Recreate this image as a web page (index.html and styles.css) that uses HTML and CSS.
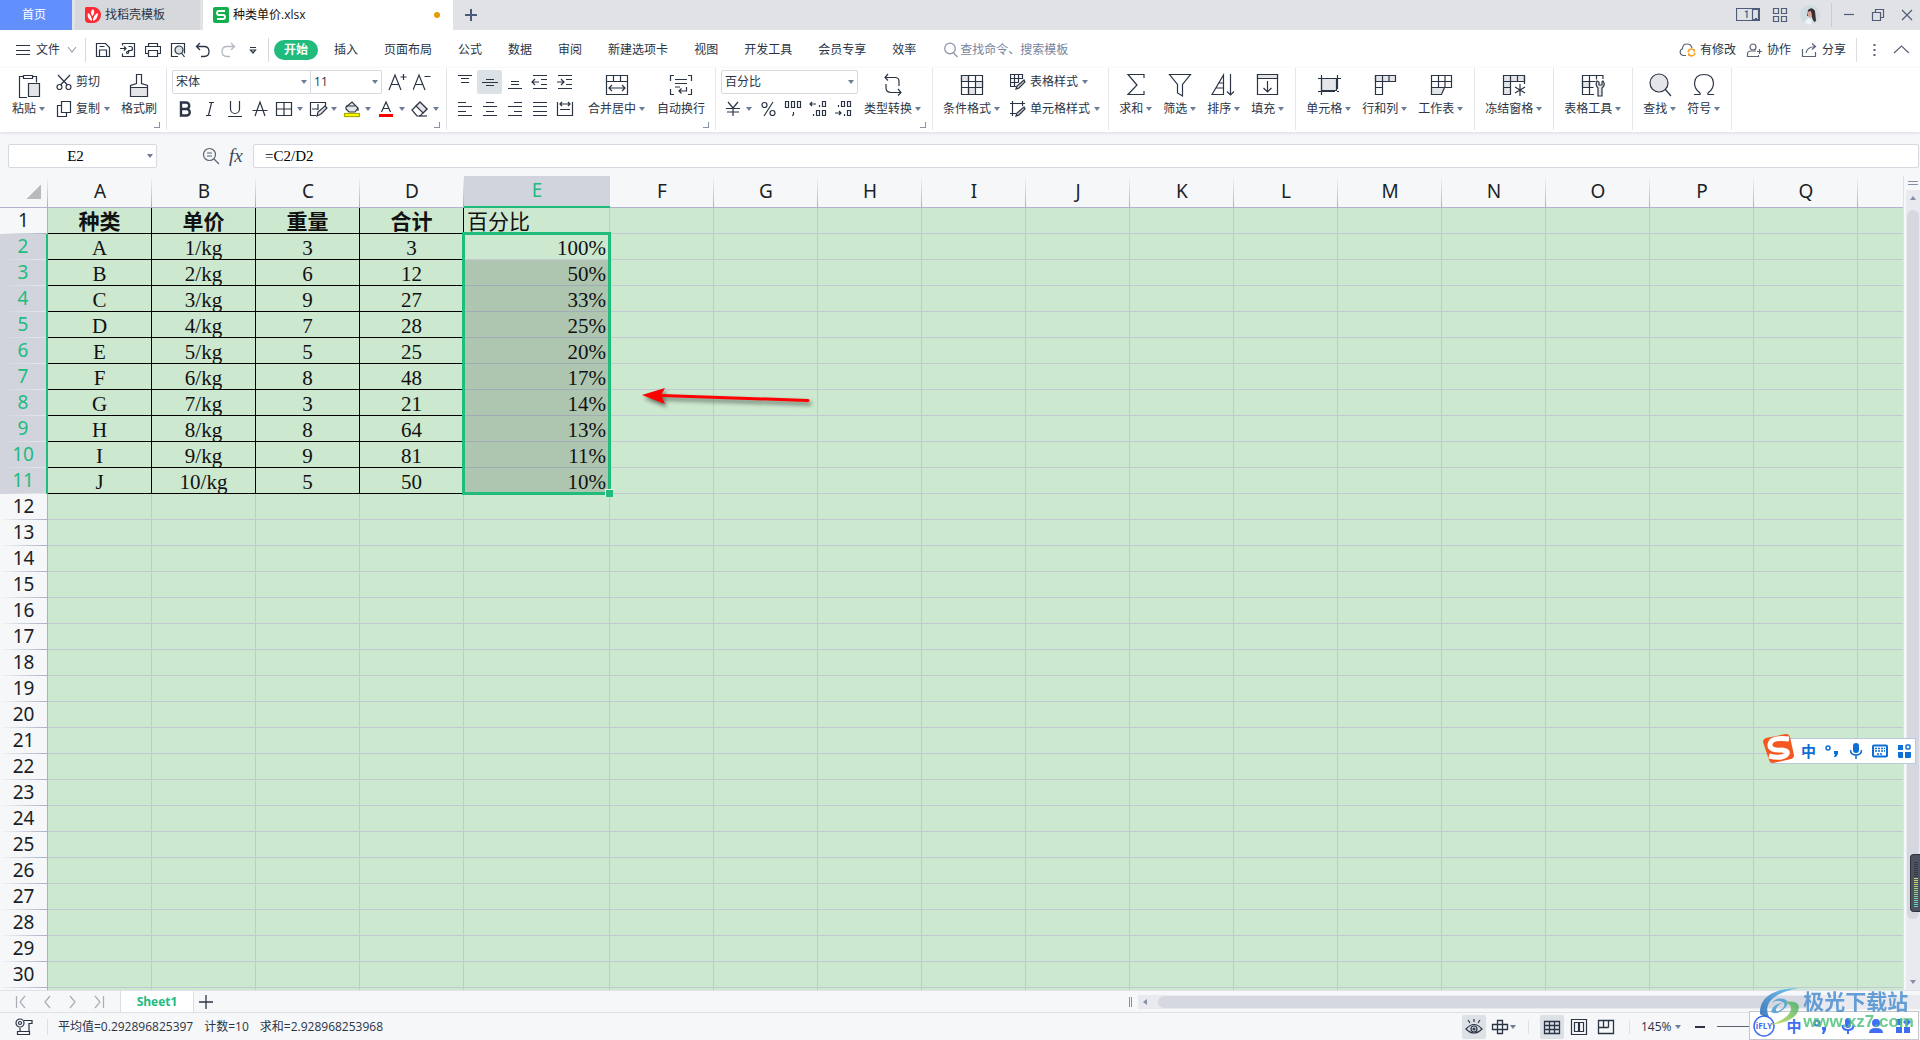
FILE: index.html
```html
<!DOCTYPE html>
<html lang="zh-CN">
<head>
<meta charset="utf-8">
<title>种类单价.xlsx</title>
<link rel="stylesheet" href="styles.css">
</head>
<body>
<header class="titlebar">
  <button class="tab tab-home">首页</button>
  <button class="tab tab-doc"><svg class="logo" viewBox="0 0 16 16"><path d="M1 0h7a8 8 0 0 1 0 16H4a4 4 0 0 1-4-4V1z" fill="#fb2c35"/><path d="M7 14C3 12 2 9 3 6c2 1 4 4 4 8zM7.500 9C5 6 6 4 8 2c2 2 1.500 5-.5 7zM8 14c0-4 2-7 5-8 0 4-2 7-5 8z" fill="#fff"/></svg>找稻壳模板</button>
  <button class="tab tab-active"><svg class="logo" viewBox="0 0 16 16"><rect width="16" height="16" rx="2" fill="#12b04c"/><path d="M12 4H6Q4 4 4 6t2 2h4q2 0 2 2t-2 2H4" fill="none" stroke="#fff" stroke-width="1.800"/></svg>种类单价.xlsx<span class="unsaved"></span></button>
  <button class="tab-add" aria-label="新建"><svg class="ic" viewBox="0 0 14 14"><path d="M7 1v12M1 7h12" stroke="#4b5a7a" stroke-width="2"/></svg></button>
  <div class="window-tools">
    <svg class="ic" width="24" height="16" viewBox="0 0 24 16"><path d="M.5 1.500h23v12H.5zM16.500 3.500v8M16.500 2.500h6v10h-6zM19 11.500h2"/><path d="M9 5l2-1v7"/></svg>
    <svg class="ic" width="16" height="16" viewBox="0 0 16 16"><path d="M1.500 1.500h5v5h-5zM9.500 1.500h5v5h-5zM1.500 9.500h5v5h-5zM9.500 9.500h5v5h-5z"/></svg>
    <svg width="20" height="20" viewBox="0 0 20 20"><circle cx="10" cy="10" r="10" fill="#cfdde3"/><path d="M8 5q4-4 7 1l1 10q-2 2-3-1l-2-5-4 1z" fill="#3a2b30"/><path d="M7 7l4-1 1 5-3 2z" fill="#d9a79c"/><path d="M4 18l4-5 3 1 1 6z" fill="#eef3f6"/></svg>
    <span class="bar"></span>
    <button aria-label="最小化"><svg class="ic" width="12" height="14" viewBox="0 0 12 14"><path d="M1 6.500h10"/></svg></button>
    <button aria-label="还原"><svg class="ic" width="14" height="14" viewBox="0 0 14 14"><path d="M1.500 4.500h8v8h-8zM4.500 4.500v-3h8v8h-3"/></svg></button>
    <button aria-label="关闭"><svg class="ic" width="12" height="14" viewBox="0 0 12 14"><path d="M1 2l10 10M11 2L1 12"/></svg></button>
  </div>
</header>

<nav class="menubar">
  <button class="file-menu"><svg class="ic" width="14" height="12" viewBox="0 0 14 12"><path d="M0 1.500h14M0 6.500h14M0 10.500h14"/></svg>文件<svg class="ic chev" width="10" height="8" viewBox="0 0 10 8"><path d="M1 1l4 5 4-5"/></svg></button>
  <span class="bar"></span>
  <div class="quick">
    <button aria-label="保存"><svg class="ic" viewBox="0 0 16 16"><path d="M1.500 1.500h9l4 4v9h-13zM4.500 14v-6h7v6M4.500 4.500h5"/></svg></button>
    <button aria-label="输出为PDF"><svg class="ic" viewBox="0 0 16 16"><path d="M2.500 3.500v-2h12v13h-12v-3M0 6.500h6M4 4.500l2 2-2 2M8.500 4.500h2a2 2 0 0 1 0 4h-2v2a1 1 0 1 1-1-1h2"/></svg></button>
    <button aria-label="打印"><svg class="ic" viewBox="0 0 16 16"><path d="M3.500 4.500v-3h9v3M3.500 11.500h-3v-7h15v7h-3M3.500 8.500h9v6h-9z"/></svg></button>
    <button aria-label="打印预览"><svg class="ic" viewBox="0 0 16 16"><path d="M8 14.500H1.500v-13h13v10"/><circle cx="9" cy="8" r="4" fill="#dcdfe4"/><path d="M11.500 11l3 4"/></svg></button>
    <button aria-label="撤销"><svg class="ic" viewBox="0 0 16 16"><path d="M5 1L1.500 4.500 5 8M2 4.500h7q5 0 5 5t-5 5H6" stroke-width="1.300"/></svg></button>
    <button aria-label="恢复"><svg class="ic pale" viewBox="0 0 16 16"><path d="M11 1l3.500 3.500L11 8M14 4.500H7q-5 0-5 5t5 5h3" stroke-width="1.300"/></svg></button>
    <button aria-label="自定义"><svg class="ic" viewBox="0 0 16 16"><path d="M5 5.500h6M5.500 8l2.500 3 2.500-3z"/></svg></button>
  </div>
  <span class="bar"></span>
  <div class="menus">
    <button class="on">开始</button><button>插入</button><button>页面布局</button><button>公式</button><button>数据</button><button>审阅</button><button>新建选项卡</button><button>视图</button><button>开发工具</button><button>会员专享</button><button>效率</button>
  </div>
  <label class="search"><svg class="ic" width="14" height="16" viewBox="0 0 14 16"><circle cx="6" cy="6.500" r="5.300"/><path d="M9.500 11l4 4"/></svg><input type="text" placeholder="查找命令、搜索模板" aria-label="查找命令"></label>
  <div class="share">
    <button><svg class="ic" viewBox="0 0 17 16"><path d="M7 13.500H4.500a3.500 3.500 0 0 1-1-6.800Q3.500 2 8 2q4 0 5 4"/><path d="M9 10a3.300 3.300 0 0 1 6-1.500V7M16 11a3.300 3.300 0 0 1-6 1.500V14" stroke="#f5a11c" stroke-width="1.600"/></svg>有修改</button>
    <button><svg class="ic" viewBox="0 0 17 16"><circle cx="7" cy="5" r="3"/><path d="M10 9H5q-3.500 0-3.500 3v2.500h11V13M11 9.500h5M13.500 7v5"/></svg>协作</button>
    <button><svg class="ic" viewBox="0 0 17 16"><path d="M1.500 7v7.500h13V10M5 11q1-6 9-6.500M11 1.500l3.500 3-3.500 3"/></svg>分享</button>
    <span class="bar"></span>
    <button aria-label="更多"><svg class="ic" viewBox="0 0 17 16"><path d="M8.500 2v2M8.500 7v2M8.500 12v2" stroke-width="2"/></svg></button>
    <button aria-label="折叠"><svg class="ic" viewBox="0 0 17 16"><path d="M1 11l7.500-7 7.500 7"/></svg></button>
  </div>
</nav>

<section class="ribbon">
  <div class="group g-clip launch">
    <button class="big"><svg class="ic" viewBox="0 0 28 28"><path d="M12 26.500H4.500v-21h4M18 5.500h3.500v6"/><path d="M8.500 4.500h9v3h-9z"/><path d="M13.500 12.500h11v13h-11z" fill="#e4e5e8"/></svg><span>粘贴<i class="caret"></i></span></button>
    <div class="rows">
      <button class="small"><svg class="ic" viewBox="0 0 16 16"><path d="M2 1l9.500 10M14 1L4.500 11"/><circle cx="3.500" cy="13" r="2.500"/><circle cx="12.500" cy="13" r="2.500"/></svg>剪切</button>
      <button class="small"><svg class="ic" viewBox="0 0 16 16"><path d="M5.500.5h9v11h-9zM5.500 4.500h-4v11h9v-4"/></svg>复制<i class="caret"></i></button>
    </div>
    <button class="big"><svg class="ic" viewBox="0 0 28 28"><path d="M5.500 16.500h17v9h-17z" fill="#e4e5e8"/><path d="M5.500 16.500v-2l6-2v-9h5v9l6 2v2"/></svg><span>格式刷</span></button>
  </div>

  <div class="group g-font launch">
    <div class="rows">
      <div class="row">
        <select class="sel sel-font" aria-label="字体"><option>宋体</option></select><select class="sel sel-size" aria-label="字号"><option>11</option></select>
        <button class="cell" aria-label="增大字号"><svg class="ic" viewBox="0 0 20 20"><path d="M1 18L7 3l6 15M3 12.500h8M15.500 2v6M12.500 5h6"/></svg></button>
        <button class="cell" aria-label="减小字号"><svg class="ic" viewBox="0 0 20 20"><path d="M0 18L6 3l6 15M2 12.500h8M11.500 4.500h6"/></svg></button>
      </div>
      <div class="row">
        <button class="cell" aria-label="加粗"><svg class="ic" viewBox="0 0 20 20"><path d="M6 3.500h5a3 3 0 0 1 0 6.500H6zM6 10h5.500a3 3 0 0 1 0 6.500H6z" stroke-width="2.400"/></svg></button>
        <button class="cell" aria-label="倾斜"><svg class="ic" viewBox="0 0 20 20"><path d="M9 3.500h5M6 16.500h5M11.500 4L8.500 16"/></svg></button>
        <button class="cell" aria-label="下划线"><svg class="ic" viewBox="0 0 20 20"><path d="M5.500 2v8a4.500 4.500 0 0 0 9 0V2M3 17.500h14"/></svg></button>
        <button class="cell" aria-label="删除线"><svg class="ic" viewBox="0 0 20 20"><path d="M5 17l5-14 5 14M2.500 11.500h15"/></svg></button>
        <button class="drop" aria-label="边框"><svg class="ic" viewBox="0 0 20 20"><path d="M2.500 3.500h15v13h-15zM10 3.500v13M2.500 10h15"/></svg><i class="caret"></i></button>
        <button class="drop" aria-label="绘图边框"><svg class="ic" viewBox="0 0 20 20"><path d="M17.500 7V3.500h-15v13H8M4 10h6M10 5v6" /><path d="M9 17l1-4 7-6 2 2-6 6z" fill="#e4e5e8"/></svg><i class="caret"></i></button>
        <button class="drop" aria-label="填充颜色"><svg class="ic" viewBox="0 0 20 20"><path d="M4 10V8l6-5 6 6-3 4H7z" fill="#e4e5e8"/><path d="M4 7h9M16 9v3"/><rect x="2.500" y="14.500" width="15" height="3" fill="#ff0" stroke="#a9a900"/></svg><i class="caret"></i></button>
        <button class="drop" aria-label="字体颜色"><svg class="ic" viewBox="0 0 20 20"><path d="M5.500 13L10 3l4.500 10M7 9.500h6"/><path d="M3 16.500h14" stroke="red" stroke-width="3"/></svg><i class="caret"></i></button>
        <button class="drop" aria-label="清除"><svg class="ic" viewBox="0 0 20 20"><path d="M2 11l8-8 7 7-7 7H7z"/><path d="M6 7l4-4 7 7-4 4z" fill="#e4e5e8"/><path d="M9 17h8"/></svg><i class="caret"></i></button>
      </div>
    </div>
  </div>

  <div class="group g-align launch">
    <div class="rows">
      <div class="row">
        <button class="cell" aria-label="顶端对齐"><svg class="ic" viewBox="0 0 20 20"><path d="M3 3.500h14M6 6.500h8M6 10.500h8"/></svg></button>
        <button class="cell on" aria-label="垂直居中"><svg class="ic" viewBox="0 0 20 20"><path d="M6 7.500h8M2 10.500h16M6 13.500h8"/></svg></button>
        <button class="cell" aria-label="底端对齐"><svg class="ic" viewBox="0 0 20 20"><path d="M6 9.500h8M6 12.500h8M3 16.500h14"/></svg></button>
        <button class="cell" aria-label="减少缩进"><svg class="ic" viewBox="0 0 20 20"><path d="M3 3.500h14M11 7.500h6M11 12.500h6M3 16.500h14M2 10h7M5 7l-3 3 3 3"/></svg></button>
        <button class="cell" aria-label="增加缩进"><svg class="ic" viewBox="0 0 20 20"><path d="M3 3.500h14M11 7.500h6M11 12.500h6M3 16.500h14M2 10h7M6 7l3 3-3 3"/></svg></button>
      </div>
      <div class="row">
        <button class="cell" aria-label="左对齐"><svg class="ic" viewBox="0 0 20 20"><path d="M3 3.500h8M3 7.500h14M3 12.500h8M3 16.500h14"/></svg></button>
        <button class="cell" aria-label="水平居中"><svg class="ic" viewBox="0 0 20 20"><path d="M6 3.500h8M3 7.500h14M6 12.500h8M3 16.500h14"/></svg></button>
        <button class="cell" aria-label="右对齐"><svg class="ic" viewBox="0 0 20 20"><path d="M9 3.500h8M3 7.500h14M9 12.500h8M3 16.500h14"/></svg></button>
        <button class="cell" aria-label="两端对齐"><svg class="ic" viewBox="0 0 20 20"><path d="M3 3.500h14M3 7.500h14M3 12.500h14M3 16.500h14"/></svg></button>
        <button class="cell" aria-label="分散对齐"><svg class="ic" viewBox="0 0 20 20"><path d="M2.500 3v14M17.500 3v14M5 10.500h10M3 16.500h14M5 5h10M7 3L5 5l2 2M13 3l2 2-2 2"/></svg></button>
      </div>
    </div>
    <button class="big"><svg class="ic" viewBox="0 0 28 28"><path d="M3.500 4.500h21v19h-21zM3.500 10.500h21M10.500 5v5M17.500 5v5M6 17h16M9 14l-3 3 3 3M19 14l3 3-3 3"/></svg><span>合并居中<i class="caret"></i></span></button>
    <button class="big"><svg class="ic" viewBox="0 0 28 28"><path d="M7 4.500H3.500V10M21 4.500h3.500V10M7 23.500H3.500V18M21 23.500h3.500V18M8 8.500h12M8 12.500h12M8 16h5M19.500 16v4H12M14.500 17.500L12 20l2.500 2.500"/></svg><span>自动换行</span></button>
  </div>

  <div class="group g-num launch">
    <div class="rows">
      <select class="sel sel-num" aria-label="数字格式"><option>百分比</option></select>
      <div class="row">
        <button class="drop" aria-label="货币"><svg class="ic" viewBox="0 0 20 20"><path d="M5 3l5 6 5-6M10 9v8M3 9.500h14M4 13h12" /></svg><i class="caret"></i></button>
        <button class="cell" aria-label="百分比样式"><svg class="ic" viewBox="0 0 20 20"><circle cx="6.500" cy="6" r="2.500"/><circle cx="14.500" cy="14" r="2.500"/><path d="M15 3L6 17"/></svg></button>
        <button class="cell" aria-label="千位分隔"><svg class="ic" viewBox="0 0 20 20"><path d="M2.500 2.500h3v6h-3zM8.500 2.500h3v6h-3zM14.500 2.500h3v6h-3zM10.500 13v2l-1 2"/></svg></button>
        <button class="cell" aria-label="增加小数"><svg class="ic" viewBox="0 0 20 20"><path d="M14.500 2.500h3v5h-3zM11.500 6v2M2 5h6M4 3L2 5l2 2M8.500 11.500h3v5h-3zM14.500 11.500h3v5h-3zM5.500 15v2"/></svg></button>
        <button class="cell" aria-label="减少小数"><svg class="ic" viewBox="0 0 20 20"><path d="M8.500 2.500h3v5h-3zM14.500 2.500h3v5h-3zM5.500 6v2M2 14h6M6 12l2 2-2 2M14.500 11.500h3v5h-3zM11.500 15v2"/></svg></button>
      </div>
    </div>
    <button class="big"><svg class="ic" viewBox="0 0 28 28"><path d="M9 3L6 6.500l3 3M6 6.500h10q4 0 4 4V15M19 18l3 3.500-3 3M22 21.500H12q-5 0-5-5V13"/></svg><span>类型转换<i class="caret"></i></span></button>
  </div>

  <div class="group g-style">
    <button class="big"><svg class="ic" viewBox="0 0 28 28"><path d="M3.500 4.500h21v19h-21z"/><path d="M3.500 4.500h7v6h-7zM17.500 10.500h7v6h-7zM10.500 16.500h7v7h-7z" fill="#e4e5e8"/><path d="M3.500 10.500h21M3.500 16.500h21M10.500 4.500v19M17.500 4.500v6"/></svg><span>条件格式<i class="caret"></i></span></button>
    <div class="rows">
      <button class="small"><svg class="ic" viewBox="0 0 16 16"><path d="M12.500 5V.5H.5v12h6M.5 4.500h12M.5 8.500h8M4.500.5v12M8.500.5v8"/><path d="M6 15l1-3 7-6 1 2-6 6z" fill="#c9ccd2"/></svg>表格样式<i class="caret"></i></button>
      <button class="small"><svg class="ic" viewBox="0 0 16 16"><path d="M0 2.500h15M2.500 0v15M12.500 0v5M0 12.500h6"/><path d="M6 15l1-3 7-6 1 2-6 6z" fill="#c9ccd2"/></svg>单元格样式<i class="caret"></i></button>
    </div>
  </div>

  <div class="group g-plain">
    <button class="big"><svg class="ic" viewBox="0 0 28 28"><path d="M22 7V3.500H6L15 14 6 23.500h16V20"/></svg><span>求和<i class="caret"></i></span></button>
    <button class="big"><svg class="ic" viewBox="0 0 28 28"><path d="M3.500 3.500h21l-8 10V25l-5-3v-8.500z"/></svg><span>筛选<i class="caret"></i></span></button>
    <button class="big"><svg class="ic" viewBox="0 0 28 28"><path d="M2 23.500L13.500 4v19.500zM6 17h7M9 12h4M20.500 3v21M17 20.500l3.500 3.500 3.500-3.500"/></svg><span>排序<i class="caret"></i></span></button>
    <button class="big"><svg class="ic" viewBox="0 0 28 28"><path d="M3.500 3.500h20v20h-20z"/><path d="M3.500 3.500h20v4h-20z" fill="#e4e5e8"/><path d="M13.500 10v11M9.500 17l4 4 4-4"/></svg><span>填充<i class="caret"></i></span></button>
  </div>
  <div class="group g-plain">
    <button class="big"><svg class="ic" viewBox="0 0 28 28"><path d="M6.500 7.500h15v12h-15z" fill="#e4e5e8"/><path d="M3 7.500h23M3 20.500h17M6.500 4v20M22.500 4v14M22 20.500h2" stroke-width="1.200"/></svg><span>单元格<i class="caret"></i></span></button>
    <button class="big"><svg class="ic" viewBox="0 0 28 28"><path d="M4.500 4.500h20v6h-20z" fill="#e4e5e8"/><path d="M4.500 4.500v19h7v-19M4.500 16.500h7M18 4.500v6"/></svg><span>行和列<i class="caret"></i></span></button>
    <button class="big"><svg class="ic" viewBox="0 0 28 28"><path d="M4.500 4.500h20v12h-20zM4.500 10.500h20M11.500 4.500v12M18 4.500v12"/><path d="M4.500 16.500h13l-3 7h-10z" fill="#e4e5e8"/></svg><span>工作表<i class="caret"></i></span></button>
  </div>
  <div class="group g-plain">
    <button class="big"><svg class="ic" viewBox="0 0 28 28"><path d="M3.500 4.500h21v6h-14v13h-7z" fill="#e4e5e8"/><path d="M3.500 10.500h7M3.500 16.500h7M10.500 4.500v6M17.500 4.500v6M24.500 5v8M20 13v12M15 16l10 6M25 16l-10 6"/></svg><span>冻结窗格<i class="caret"></i></span></button>
  </div>
  <div class="group g-plain">
    <button class="big"><svg class="ic" viewBox="0 0 28 28"><path d="M3.500 10.500h7v6h-7z" fill="#e4e5e8"/><path d="M24 8V4.500H3.500v19H15M3.500 10.500h13M3.500 16.500h11M10.500 4.500v19M17.500 4.500v4"/><path d="M19 25v-8q-3-3-1-7l2 1v3h3v-3l1-1q3 4-1 7v8z" fill="#e4e5e8"/></svg><span>表格工具<i class="caret"></i></span></button>
  </div>
  <div class="group g-plain">
    <button class="big"><svg class="ic" viewBox="0 0 28 28"><circle cx="13" cy="12" r="9" fill="#e4e5e8"/><path d="M19 18l6 7"/></svg><span>查找<i class="caret"></i></span></button>
    <button class="big"><svg class="ic" viewBox="0 0 28 28"><path d="M4 23.500h6V22Q4.500 18 4.500 12 5 3.500 14 3.500T23.500 12Q23.500 18 18 22v1.500h6"/></svg><span>符号<i class="caret"></i></span></button>
  </div>
</section>

<section class="formula">
  <input class="sel namebox" type="text" value="E2" aria-label="名称框">
  <div class="fx">
    <svg class="ic" width="18" height="18" viewBox="0 0 18 18"><circle cx="7.500" cy="7.500" r="6"/><path d="M12 12l5 5M5 6h5M5 9h5"/></svg>
    <em>fx</em>
  </div>
  <input class="fxinput" type="text" value="=C2/D2" aria-label="编辑栏">
</section>

<main class="workspace">
  <div class="sheet">
    <table class="grid" id="grid"></table>
    <div class="selection"></div>
    <svg class="arrow" width="180" height="30" viewBox="0 0 180 30"><path d="M20 11.500L166 16.500" stroke="red" stroke-width="3" stroke-linecap="round"/><path d="M0 11L23 4l-4 7 4 9z" fill="red"/></svg>
  </div>
  <div class="vscroll">
    <svg class="ic" width="12" height="14" viewBox="0 0 12 14"><path d="M1 5.500h10M1 8.500h10"/></svg>
    <div class="vtrack"><i class="up"></i><div class="vthumb"></div><i class="down"></i></div>
  </div>
</main>

<section class="sheettabs">
  <div class="nav">
    <button aria-label="首张"><svg class="ic" viewBox="0 0 14 14"><path d="M2.500 1v12M11 1L6 7l5 6"/></svg></button>
    <button aria-label="上一张"><svg class="ic" viewBox="0 0 14 14"><path d="M10 1L5 7l5 6"/></svg></button>
    <button aria-label="下一张"><svg class="ic" viewBox="0 0 14 14"><path d="M4 1l5 6-5 6"/></svg></button>
    <button aria-label="末张"><svg class="ic" viewBox="0 0 14 14"><path d="M11.500 1v12M3 1l5 6-5 6"/></svg></button>
  </div>
  <button class="sheet-on">Sheet1</button>
  <button class="sheet-add" aria-label="新建工作表"><svg class="ic" width="14" height="14" viewBox="0 0 14 14"><path d="M7 0v14M0 7h14" stroke-width="1.300"/></svg></button>
  <div class="hscroll"><span class="split"></span><div class="htrack"><i class="left"></i><div class="hthumb"></div></div></div>
</section>

<footer class="status">
  <svg class="ic" width="18" height="18" viewBox="0 0 18 18"><circle cx="5" cy="5" r="4"/><circle cx="5" cy="5" r="1.500"/><path d="M9 2.500h8v3h-3v8M5 10v4M2.500 13.500h12v3h-12z"/></svg>
  <span class="stats"><span>平均值=0.292896825397</span><span>计数=10</span><span>求和=2.928968253968</span></span>
  <div class="views">
    <button class="on" aria-label="护眼模式"><svg class="ic" viewBox="0 0 20 20"><path d="M2 12q8-9 16 0-8 8-16 0zM10 2v3M4 3l2 3M16 3l-2 3"/><circle cx="10" cy="12" r="3"/><circle cx="10" cy="12" r="1"/></svg></button>
    <button class="wide" aria-label="阅读模式"><svg class="ic" viewBox="0 0 20 20"><path d="M7.500 3.500h5v13h-5zM2.500 7.500h15v5h-15z" stroke-width="1.300"/></svg><i class="caret"></i></button>
    <span class="bar"></span>
    <button class="on" aria-label="普通视图"><svg class="ic" viewBox="0 0 20 20"><path d="M2.500 4.500h15v12h-15zM2.500 8.500h15M2.500 12.500h15M7.500 4.500v12M12.500 4.500v12" stroke-width="1.300"/></svg></button>
    <button aria-label="页面布局视图"><svg class="ic" viewBox="0 0 20 20"><path d="M2.500 2.500h15v15h-15zM5.500 5.500h4v9h-4zM10.500 5.500h4v9h-4z"/></svg></button>
    <button aria-label="分页预览"><svg class="ic" viewBox="0 0 20 20"><path d="M2.500 3.500h15v13h-15zM7.500 3.500v7M12.500 3.500v7M2.500 10.500h10" stroke-width="1.300"/></svg></button>
    <span class="bar"></span>
    <button class="zoom">145%<i class="caret"></i></button>
    <button class="minus" aria-label="缩小"><svg class="ic" width="12" height="12" viewBox="0 0 12 12"><path d="M1 6h10" stroke-width="2"/></svg></button>
    <input class="slider" type="range" aria-label="显示比例" value="60">
  </div>
</footer>

<div class="ime sogou">
  <svg class="mark" width="32" height="32" viewBox="0 0 32 32"><path d="M3 5l20-4q3 0 4 3l4 18q0 3-3 4l-18 4q-3 0-4-3L0 9q0-3 3-4z" fill="#f4581f"/><path d="M26 6Q8 4 7 11t12 6q8 1 4 5-5 4-17 1" fill="none" stroke="#fff" stroke-width="5"/></svg>
  <b>中</b>
  <svg viewBox="0 0 16 16"><circle cx="4" cy="5" r="2" fill="none" stroke="currentColor" stroke-width="1.500"/><path d="M10 8h4v3l-2 3h-2l1-3h-1z"/></svg>
  <svg viewBox="0 0 16 16"><rect x="5" y="0" width="6" height="10" rx="3"/><path d="M2.500 7q0 5 5.500 5t5.500-5M8 12v4" fill="none" stroke="currentColor" stroke-width="1.500"/></svg>
  <svg viewBox="0 0 16 16"><rect x="1" y="2.500" width="14" height="11" rx="1" fill="none" stroke="currentColor" stroke-width="2"/><path d="M3 5.500h10M3 8h10M5 11h6" fill="none" stroke="currentColor" stroke-width="1.500" stroke-dasharray="2 1"/></svg>
  <svg viewBox="0 0 16 16"><path d="M2 2h5v5H2zM2 9h5v6H3l-1-1zM9 9h6v5l-1 1H9z"/><rect x="10" y="2" width="4" height="4" rx="1" fill="none" stroke="currentColor" stroke-width="1.500"/></svg>
</div>

<div class="meter"></div>

<div class="ime ifly">
  <svg class="mark" width="22" height="22" viewBox="0 0 22 22"><circle cx="11" cy="11" r="10" fill="#fff" stroke="#3c6df0" stroke-width="1.500"/><text x="11" y="14" text-anchor="middle">iFLY</text></svg>
  <b>中</b>
  <svg viewBox="0 0 16 16"><circle cx="4" cy="5" r="2.500" fill="none" stroke="currentColor" stroke-width="2"/><path d="M9 9h4v3l-2 4H9l1-4H9z"/></svg>
  <svg viewBox="0 0 16 16"><rect x="5" y="0" width="6" height="10" rx="3"/><path d="M2.500 7q0 5 5.500 5t5.500-5M8 12v4" fill="none" stroke="currentColor" stroke-width="2"/></svg>
  <svg viewBox="0 0 16 16"><circle cx="8" cy="5" r="4"/><path d="M1 15q0-5 7-5t7 5z"/></svg>
  <svg viewBox="0 0 16 16"><path d="M1 1h6v6H1zM1 9h6v6H1zM9 9h6v6H9zM12 0l4 4-4 4-4-4z"/></svg>
</div>

<div class="watermark">
  <svg width="44" height="40" viewBox="0 0 44 40"><defs><linearGradient id="wb" x1="0" y1="1" x2="1" y2="0"><stop offset="0" stop-color="#2a66b4"/><stop offset="1" stop-color="#5cc3ee"/></linearGradient><linearGradient id="wg" x1="1" y1="0" x2="0" y2="1"><stop offset="0" stop-color="#3fae6c"/><stop offset="1" stop-color="#d3e254"/></linearGradient></defs><path d="M1 26Q0 8 22 2q9-2 18-2Q14 5 9 17q-2 6 1 12-6 0-9-3z" fill="url(#wb)"/><path d="M12 24q2-8 11-9-6 3-6 7t7-2q4-5-3-7-5-1-8 2 4-6 12-4 7 3 1 9-8 8-14 4z" fill="#4a9fd4"/><path d="M25 14q14-2 15 5Q39 34 10 37q22-7 22-17 0-4-7-6z" fill="url(#wg)"/></svg>
  <div><strong>极光下载站</strong><span>www.xz7.com</span></div>
</div>
<script src="grid.js"></script>
</body>
</html>
```
FILE: styles.css
```css
* { box-sizing: border-box; }
:root { --ink: #2b3445; --green: #21bb7e; --line: #c1c8d6; --chrome: #f5f7f9; }
body {
  margin: 0; height: 100vh; display: flex; flex-direction: column; overflow: hidden; position: relative;
  background: var(--chrome); color: var(--ink);
  font: 12px/16px "Open Sans", "Noto Sans CJK SC", sans-serif;
}
button { border: 0; padding: 0; background: none; color: inherit; font: inherit; display: flex; align-items: center; white-space: nowrap; }
input, select { font: inherit; color: inherit; margin: 0; }
.ic { fill: none; stroke: var(--ink); stroke-width: 1.200; flex: none; display: block; }
.pale { stroke: #b5b9c2; }
.bar { width: 1px; height: 24px; background: #d5d8de; flex: none; }
.caret, .up, .down, .left { display: block; width: 0; height: 0; flex: none; border: 3px solid transparent; }
.caret { border-top: 4px solid #6f7c96; border-bottom: 0; margin: 0 1px 0 3px; }

.titlebar { display: flex; height: 30px; background: #e1e2e6; flex: none; }
.tab { height: 30px; }
.tab-home { width: 72px; justify-content: center; background: #618ffb; color: #fff; margin-right: 3px; padding-right: 4px; }
.tab-doc { width: 125px; padding-left: 10px; background: #d7d8dc; margin-right: 3px; gap: 4px; }
.tab-active { width: 250px; padding: 0 13px 0 10px; background: #fff; gap: 4px; color: #111; }
.logo { width: 16px; height: 16px; flex: none; }
.unsaved { width: 6px; height: 6px; border-radius: 50%; background: #e69b06; margin-left: auto; }
.tab-add { width: 36px; justify-content: center; }
.tab-add svg { width: 14px; height: 14px; }
.window-tools { margin-left: auto; display: flex; align-items: center; gap: 12px; padding-right: 7px; }
.window-tools .ic { stroke: #4e5c7a; }
.window-tools .bar { margin: 0 -1px; background: #c9cbd0; }
.window-tools button + button { margin-left: 4px; }

.menubar { display: flex; align-items: center; height: 38px; background: #fff; padding: 2px 10px 0 16px; flex: none; }
.file-menu { gap: 6px; margin-right: 8px; }
.chev { stroke: #9aa1ae; margin-left: 1px; }
.quick { display: flex; padding: 0 3px 0 4px; }
.quick button { width: 25px; height: 24px; justify-content: center; }
.quick svg { width: 16px; height: 16px; }
.menus { display: flex; align-items: center; gap: 26px; padding: 0 28px 0 5px; }
.menus .on { background: var(--green); color: #fff; font-weight: 700; height: 20px; padding: 0 10px; border-radius: 10px; margin-right: -10px; }
.search { display: flex; align-items: center; gap: 2px; }
.search .ic { stroke: #8a94ab; }
.search input { border: 0; padding: 0; width: 130px; outline: 0; background: none; }
.search input::placeholder { color: #7683a0; opacity: 1; }
.share { display: flex; align-items: center; gap: 10px; margin-left: auto; }
.share button { gap: 4px; }
.share .bar { background: #dcdee2; margin-right: -1px; }
.share svg { width: 17px; height: 16px; stroke: #5b6475; }

.ribbon { display: flex; background: #fff; padding-bottom: 2px; flex: none; box-shadow: 0 1px 3px #d9dbdf; z-index: 1; }
.group { display: flex; height: 62px; padding-top: 2px; border-right: 1px solid #e4e6e9; position: relative; align-items: flex-start; flex: none; }
.g-clip { padding-left: 12px; padding-right: 9px; gap: 10px; }
.g-font { padding-left: 5px; padding-right: 4px; }
.g-align { padding-left: 5px; padding-right: 10px; gap: 11px; }
.g-num { padding-left: 5px; padding-right: 10px; gap: 6px; }
.g-style { padding-left: 10px; padding-right: 7px; gap: 9px; }
.g-plain { padding-left: 10px; padding-right: 10px; gap: 10px; }
.launch::after { content: ""; position: absolute; right: 6px; bottom: 2px; width: 5px; height: 5px; border: solid #8a93a6; border-width: 0 1px 1px 0; }
.big { flex-direction: column; }
.big svg { width: 28px; height: 28px; margin: 1px 0; }
.big span { display: flex; align-items: center; height: 18px; }
.rows { display: flex; flex-direction: column; gap: 3px; }
.row { display: flex; }
.small { height: 24px; gap: 4px; }
.small .caret { margin: 0 1px 0 0; }
.small svg { width: 16px; height: 16px; }
.cell { width: 25px; height: 24px; justify-content: center; border-radius: 2px; }
.drop { width: 34px; height: 24px; padding-left: 2px; }
.cell svg, .drop svg { width: 20px; height: 20px; }
.cell.on, .views .on { background: #dce1e6; }
.sel {
  appearance: none; height: 24px; border: 1px solid #d6d9df; border-radius: 2px; padding: 0 3px; outline: 0; background: #fff
  url("data:image/svg+xml,%3Csvg xmlns='http://www.w3.org/2000/svg' width='6' height='4'%3E%3Cpath d='M0 0h6L3 4z' fill='%236f7c96'/%3E%3C/svg%3E") no-repeat right 3px center;
}
.sel-font { width: 139px; border-radius: 2px 0 0 2px; }
.sel-size { width: 71px; border-left: 0; border-radius: 0 2px 2px 0; margin-right: 3px; }
.sel-num { width: 137px; }

.formula { display: flex; align-items: center; height: 44px; padding: 4px 1px 0 8px; flex: none; }
.formula input { font: 15px/20px "Liberation Serif", "Noto Sans CJK SC", serif; color: #000; }
.formula .namebox { width: 149px; text-align: center; padding: 0 20px 0 6px; }
.fx { display: flex; align-items: center; gap: 9px; width: 96px; padding-left: 45px; }
.fx em { font: italic 19px/20px "Liberation Serif", serif; color: #3d4658; }
.fx .ic { stroke: #5b6475; }
.fxinput { flex: 1; height: 24px; border: 1px solid #d6d9df; border-radius: 2px; padding: 0 11px; outline: 0; background: #fff; }

.workspace { flex: 1; min-height: 0; display: flex; }
.sheet { flex: 1; min-width: 0; overflow: hidden; position: relative; background: #cce8cf; }
.grid { table-layout: fixed; border-collapse: separate; border-spacing: 0; width: 1962px; }
.c-row { width: 48px; }
.c-std { width: 104px; }
.c-wide { width: 146px; }
.grid tr { height: 26px; }
.grid thead tr { height: 32px; }
.grid th { padding: 0 0 2px; font: 19px/22px "Noto Sans", sans-serif; color: #1c1f26; background: var(--chrome); }
.grid thead th { border-bottom: 1px solid #b0b3cc; background: linear-gradient(#f5f7f9, #a9b0c6) no-repeat right / 1px 100% var(--chrome); }
.grid thead th.hit { background: #d1d4dc; color: var(--green); border-bottom: 2px solid var(--green); }
.grid tbody th { background: linear-gradient(90deg, #f5f7f9, #a9b0c6) no-repeat bottom / 100% 1px var(--chrome); border-right: 1px solid #a9b0c6; }
.grid tbody th.hit { background: #d1d4dc; background: linear-gradient(90deg, #d1d4dc, #e6e8ee) no-repeat bottom / 100% 1px #d1d4dc; color: var(--green); border-right: 2px solid var(--green); }
.grid td {
  padding: 4px 3px 0; border: solid var(--line); border-width: 0 1px 1px 0; color: #111;
  font: 21px/21px "Liberation Serif", "Noto Sans CJK SC", serif; text-align: center; white-space: nowrap; overflow: hidden;
}
.grid td.box { border-color: #000; }
.grid td.bold { font-weight: 700; }
.grid td.txt { text-align: left; }
.grid td.pct { text-align: right; }
.grid td.shade { background: #aec5b0; border-bottom-color: #a3abb7; }
.corner { width: 15px; height: 15px; margin: 2px 7px 0 auto; background: linear-gradient(135deg, transparent 50%, #b9babd 50%); }
.selection { position: absolute; left: 462px; top: 56px; width: 149px; height: 263px; border: 3px solid var(--green); }
.selection::after { content: ""; position: absolute; right: -5px; bottom: -5px; width: 7px; height: 7px; background: var(--green); border: solid #e8f5ea; border-width: 1px 0 0 1px; }
.arrow { position: absolute; left: 642px; top: 208px; fill: none; filter: drop-shadow(2px 3px 2px #0008); }
.vscroll { width: 17px; border-left: 1px solid #dfe1e8; display: flex; flex-direction: column; align-items: center; padding-left: 2px; }
.vscroll .ic { stroke: #8390aa; }
.vtrack { flex: 1; width: 14px; background: #e9eaf0; display: flex; flex-direction: column; align-items: center; padding: 6px 0 6px; }
.up { border-bottom: 4px solid #8390aa; border-top: 0; }
.down { border-top: 4px solid #8390aa; border-bottom: 0; margin-top: auto; }
.vthumb { width: 12px; height: 90%; margin-top: 10px; border-radius: 6px; background: #d5d8e0; }

.sheettabs { display: flex; align-items: center; height: 22px; border-top: 1px solid #e0e2ea; flex: none; padding-left: 8px; }
.nav { display: flex; padding-right: 8px; }
.nav button { width: 26px; justify-content: center; }
.nav svg { width: 14px; height: 14px; stroke: #a9adb6; }
.sheet-on { width: 74px; height: 21px; justify-content: center; background: #fff; border: solid #dcdee6; border-width: 0 1px; color: var(--green); font-weight: 700; }
.sheet-add { padding: 0 5px; }
.hscroll { margin-left: auto; width: calc(41% + 7px); display: flex; align-items: center; gap: 6px; }
.split { width: 3px; height: 10px; border: solid #8390aa; border-width: 0 1px; }
.htrack { flex: 1; height: 14px; background: #e9eaf0; display: flex; align-items: center; padding-left: 5px; }
.left { border-right: 4px solid #8390aa; border-left: 0; }
.hthumb { width: 84%; height: 12px; margin-left: 11px; border-radius: 6px; background: #d5d8e0; }

.status { display: flex; align-items: center; height: 28px; border-top: 1px solid #dfe1e9; flex: none; padding-left: 15px; }
.stats { display: flex; gap: 11px; border-left: 1px solid #dddfe5; margin-left: 14px; padding-left: 10px; }
.views { margin-left: auto; display: flex; align-items: center; padding-right: 59px; }
.views button { width: 24px; height: 24px; justify-content: center; border-radius: 2px; margin-right: 3px; }
.views svg { width: 20px; height: 20px; }
.views .wide { width: 28px; }
.views .wide .caret { margin: 0; }
.views .bar { height: 14px; margin: 0 11px 0 8px; background: #dfe1e6; }
.views .zoom { width: 42px; justify-content: flex-start; }
.views .minus { margin: 0 5px 0 2px; }
.views .minus svg { width: 12px; height: 12px; }
.slider { appearance: none; width: 144px; height: 1px; background: #5b6475; }
.slider::-webkit-slider-thumb { appearance: none; width: 8px; height: 12px; background: #5b6475; }

.ime { position: absolute; z-index: 2; display: flex; align-items: center; background: #fff; color: #0d6ed6; border: 1px solid #b9c8dc; }
.ime svg { fill: currentColor; width: 16px; height: 16px; flex: none; }
.ime b { font-size: 15px; line-height: 20px; }
.sogou { right: 4px; top: 738px; height: 26px; gap: 8px; padding-right: 3px; }
.sogou .mark { width: 32px; height: 32px; margin: 0 -2px 4px -8px; }
.ifly { right: 1px; bottom: 0; height: 29px; width: 170px; color: #3f6ef2; border-color: #c4c6ca; justify-content: space-between; padding: 0 7px 0 3px; }
.ifly .mark { width: 22px; height: 22px; }
.ifly text { font: 700 8px "Open Sans", sans-serif; fill: #3c6df0; }
.meter {
  position: absolute; right: 0; top: 854px; width: 10px; height: 58px; border-radius: 4px 0 0 4px; border: 1px solid #2f333c; border-right: 0;
  background: repeating-linear-gradient(#4c5260 0 1px, transparent 1px 2px) no-repeat 3px 6px / 4px 46px, linear-gradient(#333945 35%, #e0d968 35%, #9bd08c 65%, #5fd0c8) no-repeat 3px 6px / 4px 46px, #4c5260;
  z-index: 2;
}
.watermark { position: absolute; right: 6px; bottom: 8px; z-index: 3; display: flex; opacity: .85; }
.watermark div { display: flex; flex-direction: column; }
.watermark strong { font: 700 21px/24px "Noto Sans CJK SC", sans-serif; color: #4d8fd0; }
.watermark span { font: 700 17px/20px "Liberation Sans", sans-serif; color: #4fc27c; }
```
FILE: grid.js
```js
const columns = "ABCDEFGHIJKLMNOPQR".split("");
const rowCount = 31;
const data = [
  ["种类", "单价", "重量", "合计", "百分比"],
  ["A", "1/kg", "3", "3", "100%"],
  ["B", "2/kg", "6", "12", "50%"],
  ["C", "3/kg", "9", "27", "33%"],
  ["D", "4/kg", "7", "28", "25%"],
  ["E", "5/kg", "5", "25", "20%"],
  ["F", "6/kg", "8", "48", "17%"],
  ["G", "7/kg", "3", "21", "14%"],
  ["H", "8/kg", "8", "64", "13%"],
  ["I", "9/kg", "9", "81", "11%"],
  ["J", "10/kg", "5", "50", "10%"]
];

function cellClass(row, col) {
  if (row > data.length || col > 4) return "";
  if (col < 4) return row === 1 ? "box bold" : "box";
  if (row === 1) return "txt";
  return row === 2 ? "pct" : "pct shade";
}

let html = '<colgroup><col class="c-row">';
html += columns.map(c => `<col class="${c === "E" ? "c-wide" : "c-std"}">`).join("");
html += '</colgroup><thead><tr><th><div class="corner"></div></th>';
html += columns.slice(0, 17).map(c => `<th scope="col"${c === "E" ? ' class="hit"' : ""}>${c}</th>`).join("");
html += "<th></th></tr></thead><tbody>";
for (let r = 1; r <= rowCount; r++) {
  const hit = r > 1 && r <= data.length ? ' class="hit"' : "";
  html += `<tr><th scope="row"${hit}>${r < rowCount ? r : ""}</th>`;
  columns.forEach((_, c) => {
    html += `<td class="${cellClass(r, c)}">${(data[r - 1] || [])[c] || ""}</td>`;
  });
  html += "</tr>";
}
document.getElementById("grid").innerHTML = html + "</tbody>";
```
